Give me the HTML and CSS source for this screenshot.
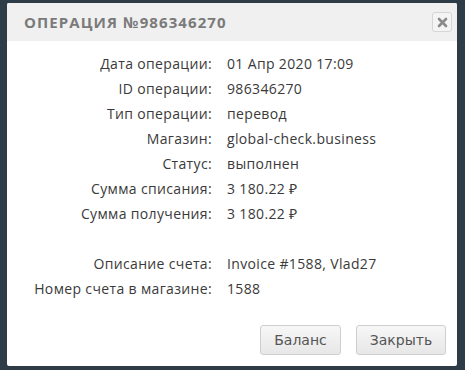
FILE: index.html
```html
<!DOCTYPE html>
<html lang="ru">
<head>
<meta charset="utf-8">
<link rel="stylesheet" href="styles.css">
</head>
<body>
<div class="dialog">
  <div class="header">
    <div class="title">Операция №986346270</div>
    <button class="close" aria-label="close">
      <svg width="11" height="11" viewBox="0 0 11 11"><path d="M2 2 L9 9 M9 2 L2 9" stroke="#8a8a8a" stroke-width="2.6" stroke-linecap="round"/></svg>
    </button>
  </div>
  <div class="body">
    <div class="grid">
      <div class="label">Дата операции:</div><div class="value">01 Апр 2020 17:09</div>
      <div class="label">ID операции:</div><div class="value">986346270</div>
      <div class="label">Тип операции:</div><div class="value">перевод</div>
      <div class="label">Магазин:</div><div class="value">global-check.business</div>
      <div class="label">Статус:</div><div class="value">выполнен</div>
      <div class="label">Сумма списания:</div><div class="value">3 180.22 ₽</div>
      <div class="label">Сумма получения:</div><div class="value">3 180.22 ₽</div>
      <div class="label"></div><div class="value"></div>
      <div class="label">Описание счета:</div><div class="value">Invoice #1588, Vlad27</div>
      <div class="label">Номер счета в магазине:</div><div class="value">1588</div>
    </div>
    <div class="actions">
      <button class="btn btn-balance">Баланс</button>
      <button class="btn btn-close">Закрыть</button>
    </div>
  </div>
</div>
</body>
</html>
```
FILE: styles.css
```css
html, body {
  margin: 0;
  padding: 0;
  background: #2d3c46;
  width: 465px;
  height: 370px;
  overflow: hidden;
}
body {
  padding: 3px 8px 4px 7px;
  box-sizing: border-box;
}
.dialog {
  width: 450px;
  height: 363px;
  background: #fff;
  border-radius: 2px;
  display: flex;
  flex-direction: column;
  overflow: hidden;
}
.header {
  height: 38px;
  background: #f0f0f0;
  display: flex;
  align-items: center;
  justify-content: space-between;
  padding: 0 5px 0 17px;
}
.title {
  font-family: "Open Sans", sans-serif;
  font-weight: 700;
  font-size: 15px;
  letter-spacing: 1.1px;
  text-transform: uppercase;
  color: #7a7a7a;
}
.close {
  width: 20px;
  height: 20px;
  padding: 0;
  border: 1px solid #d6d6d6;
  border-radius: 3px;
  background: #f4f4f4;
  display: flex;
  align-items: center;
  justify-content: center;
}
.body {
  flex: 1;
  display: flex;
  flex-direction: column;
  padding: 10px 11px 11px 0;
}
.grid {
  display: grid;
  grid-template-columns: 205px 1fr;
  column-gap: 15px;
  grid-auto-rows: 25px;
  font-family: "Open Sans", sans-serif;
  font-size: 14px;
  letter-spacing: 0.35px;
  line-height: 25px;
  color: #3a3a3a;
}
.label {
  text-align: right;
  white-space: nowrap;
}
.value {
  white-space: nowrap;
}
.actions {
  margin-top: auto;
  display: flex;
  justify-content: flex-end;
  gap: 15px;
}
.btn {
  height: 30px;
  font-family: "DejaVu Sans", Verdana, sans-serif;
  font-size: 14px;
  color: #555;
  border: 1px solid #cfcfcf;
  border-radius: 3px;
  background: linear-gradient(#f7f7f7, #e7e7e7);
  padding: 0;
}
.btn-balance { width: 81px; }
.btn-close { width: 90px; }
```
